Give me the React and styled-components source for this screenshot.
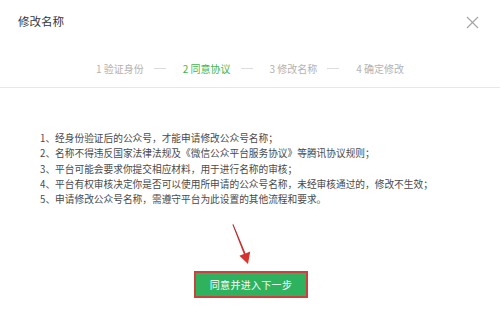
import React from 'react';
import styled, { createGlobalStyle } from 'styled-components';

const GlobalStyle = createGlobalStyle`
  html, body {
    margin: 0;
    padding: 0;
    background: #fff;
  }
  body {
    font-family: "Noto Sans CJK SC", "Noto Sans", sans-serif;
  }
`

const steps = ['1 验证身份', '2 同意协议', '3 修改名称', '4 确定修改']

const rules = [
  '1、经身份验证后的公众号，才能申请修改公众号名称；',
  '2、名称不得违反国家法律法规及《微信公众平台服务协议》等腾讯协议规则；',
  '3、平台可能会要求你提交相应材料，用于进行名称的审核；',
  '4、平台有权审核决定你是否可以使用所申请的公众号名称，未经审核通过的，修改不生效；',
  '5、申请修改公众号名称，需遵守平台为此设置的其他流程和要求。',
]

const App = () => {
  return (
    <StyledDialog>
      <GlobalStyle />

      {/* Header */}
      <StyledHeader>
        <StyledTitle>修改名称</StyledTitle>
        <StyledClose aria-label="关闭">
          <svg width="13" height="13" viewBox="0 0 13 13">
            <path d="M1 1L12 12M12 1L1 12" stroke="#a3a3a3" strokeWidth="1.1" fill="none" />
          </svg>
        </StyledClose>
      </StyledHeader>

      {/* Steps */}
      <StyledSteps>
        {steps.map((step, index) => (
          <React.Fragment key={index}>
            {index > 0 && <StyledStepLine />}
            <StyledStep active={index === 1}>{step}</StyledStep>
          </React.Fragment>
        ))}
      </StyledSteps>

      {/* Body */}
      <StyledBody>
        <StyledList>
          {rules.map((rule, index) => (
            <li key={index}>{rule}</li>
          ))}
        </StyledList>

        <StyledFooter>
          <StyledArrow width="24" height="42" viewBox="0 0 24 42">
            <defs>
              <linearGradient id="arrowFill" x1="0" y1="0" x2="0" y2="1">
                <stop offset="0" stopColor="#a8262a" />
                <stop offset="1" stopColor="#e0352f" />
              </linearGradient>
            </defs>
            <path d="M2.4 1.6 L3.4 1.2 L15.6 30.4 L20.2 28.6 L18 41 L9.4 32.8 L13.8 31.1 Z" fill="url(#arrowFill)" />
          </StyledArrow>
          <StyledButton>同意并进入下一步</StyledButton>
        </StyledFooter>
      </StyledBody>
    </StyledDialog>
  );
}

const StyledDialog = styled.div`
  width: 500px;
  height: 319px;
  background: #fff;
  overflow: hidden;
`
const StyledHeader = styled.header`
  height: 42px;
  padding: 0 20px 0 18px;
  display: flex;
  align-items: center;
  justify-content: space-between;
`
const StyledTitle = styled.h3`
  margin: 0;
  font-size: 11.5px;
  font-weight: normal;
  color: #353535;
`
const StyledClose = styled.button`
  width: 15px;
  height: 15px;
  padding: 0;
  margin-top: 3px;
  border: none;
  background: none;
  display: flex;
  align-items: center;
  justify-content: center;
`
const StyledSteps = styled.div`
  height: 46px;
  padding: 8px 0 0 0;
  box-sizing: border-box;
  border-bottom: 1px solid #e7e7eb;
  display: flex;
  align-items: center;
  justify-content: center;
`
const StyledStep = styled.span`
  font-size: 10px;
  line-height: 14px;
  color: ${props => props.active ? '#44b549' : '#b2b2b2'};
`
const StyledStepLine = styled.span`
  width: 12px;
  height: 1px;
  background: #dcdcdc;
  margin: 0 17px 0 10px;
`
const StyledBody = styled.section`
  padding-top: 43px;
`
const StyledList = styled.ol`
  list-style: none;
  margin: 0;
  padding: 0 0 0 40px;
  font-size: 9.7px;
  line-height: 15.3px;
  color: #4a4a4a;
`
const StyledFooter = styled.div`
  position: relative;
  display: flex;
  justify-content: center;
  padding-top: 64px;
  padding-left: 2px;
`
const StyledArrow = styled.svg`
  position: absolute;
  left: 230px;
  top: 16px;
`
const StyledButton = styled.button`
  width: 114px;
  height: 27px;
  padding: 0;
  border: 2px solid #c9423f;
  background: #2fb25d;
  color: #fff;
  font-family: inherit;
  font-size: 10px;
  letter-spacing: 0.3px;
`

export default App;
